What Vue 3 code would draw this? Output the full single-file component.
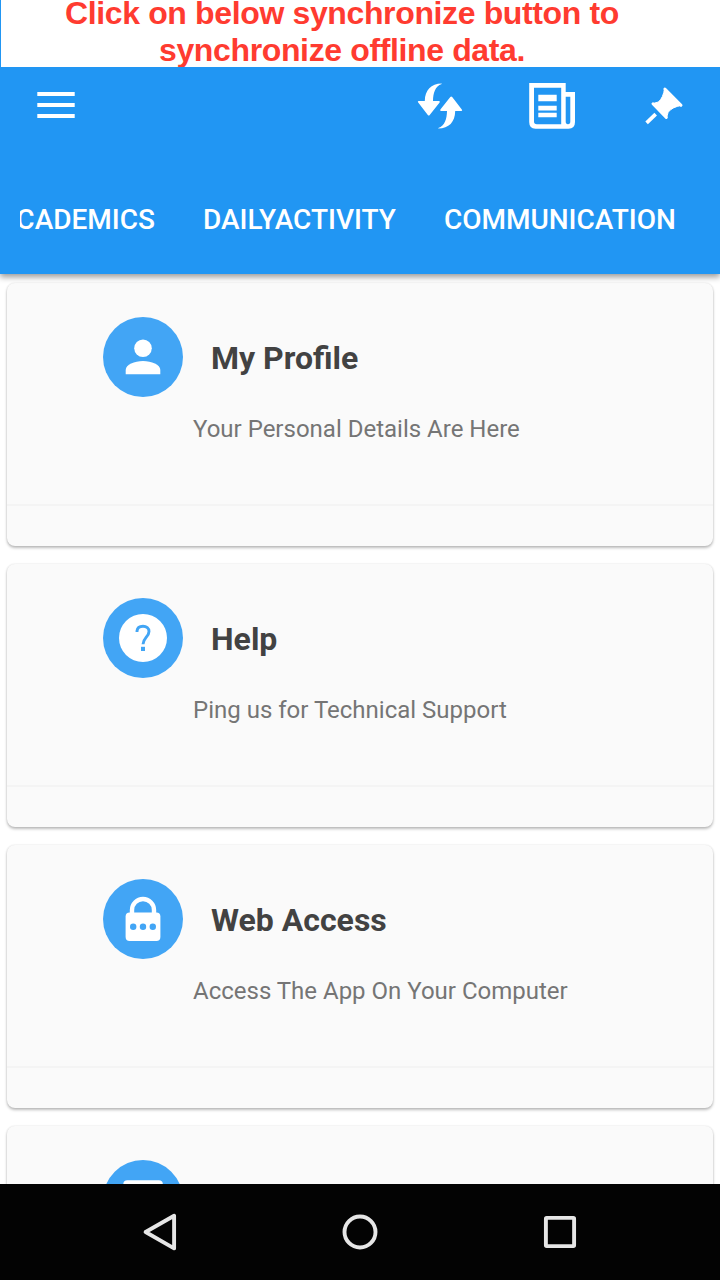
<script setup>
const tabs = [
  { label: 'ACADEMICS', cls: 'first' },
  { label: 'DAILYACTIVITY', cls: 'second' },
  { label: 'COMMUNICATION', cls: 'third' },
]
const cards = [
  { icon: 'person', title: 'My Profile', text: 'Your Personal Details Are Here' },
  { icon: 'help', title: 'Help', text: 'Ping us for Technical Support' },
  { icon: 'lock', title: 'Web Access', text: 'Access The App On Your Computer' },
  { icon: 'page', title: '', text: '' },
]
const arrow = 'M441.7 83.5C431 83.5 425 90 424.8 101H418.6Q417.2 101.2 418.2 102.4L427.8 114.9Q428.8 116.2 429.7 114.9L439.6 102.4Q440.4 101.2 439 101H433C433.2 93 435 86.5 441.7 84Z'
</script>

<template>
  <div class="screen">
    <div class="banner">
      <div class="line one">Click on below synchronize button to</div>
      <div class="line two">synchronize offline data.</div>
    </div>
    <header class="appbar">
      <div class="toolbar">
        <svg class="menu" width="38" height="27" viewBox="0 0 38 27">
          <path d="M0.3 0H37.7V4H0.3ZM0.3 11H37.7V15H0.3ZM0.3 22H37.7V26H0.3Z" fill="#fff" />
        </svg>
        <svg class="sync" width="48" height="48" viewBox="416 82 48 48" fill="#fff">
          <path :d="arrow" />
          <path transform="rotate(180 440 106)" :d="arrow" />
        </svg>
        <svg class="news" width="48" height="48" viewBox="528 82 48 48" fill="#fff">
          <path fill-rule="evenodd" d="M529.2 83H565.7V92H575V122Q575 128.7 568.5 128.7H535.5Q529.2 128.7 529.2 122ZM534 87.7V121.5Q534 124.3 536.8 124.3H561.2V87.7ZM565.7 96.7V121.5Q565.7 124.3 568 124.3Q570.3 124.3 570.3 121.5V96.7Z" />
          <path d="M538.3 94.7H556.7V101.2H538.3ZM538.3 105.8H556.7V110.5H538.3ZM538.3 112.8H556.7V117.3H538.3Z" />
        </svg>
        <svg class="pin" width="40" height="40" viewBox="644 86 40 40" fill="#fff" stroke="#fff" stroke-linecap="round" stroke-linejoin="round">
          <path stroke-width="1" d="M664.6 88.6L681.4 105.4C675.5 106.4 671 108.5 668.2 112.2L666.6 117.4L652.8 103.6L658.4 102C662 99 663.6 94.5 664.6 88.6Z" />
          <path stroke-width="3" d="M664.9 89L681 105.3M653 103.8L666.3 117.4" />
          <path stroke-width="3.7" stroke-linecap="butt" d="M655.7 114.2L646.6 122.9" />
        </svg>
      </div>
      <nav class="tabs">
        <span v-for="t in tabs" :key="t.label" class="tab" :class="t.cls">{{ t.label }}</span>
      </nav>
    </header>
    <main class="list">
      <section v-for="c in cards" :key="c.icon" class="card">
        <div class="body">
          <div class="head">
            <svg width="80" height="80" viewBox="0 0 80 80">
              <circle cx="40" cy="40" r="40" fill="#42a5f5" />
              <g v-if="c.icon === 'person'" fill="#fff">
                <circle cx="40" cy="31.3" r="8.8" />
                <path d="M22.7 57.3V53C22.7 47.5 31.5 44 40 44S57.3 47.5 57.3 53V57.3Z" />
              </g>
              <g v-else-if="c.icon === 'help'">
                <circle cx="40" cy="40" r="24" fill="#fff" />
                <path d="M34 34V33C34.3 30 36.5 28.3 40 28.3S46 30.3 46 33.5C46 38.5 40.2 40 40 46.2" fill="none" stroke="#42a5f5" stroke-width="2.9" />
                <path d="M38 48.8H42V53H38Z" fill="#42a5f5" />
              </g>
              <g v-else-if="c.icon === 'lock'">
                <path d="M29 36V31A11 11 0 0 1 51 31V36" fill="none" stroke="#fff" stroke-width="4.4" />
                <rect x="22.6" y="33.5" width="34.8" height="28.5" rx="4" fill="#fff" />
                <g fill="#42a5f5">
                  <circle cx="30.2" cy="47.7" r="3.2" />
                  <circle cx="40" cy="47.7" r="3.2" />
                  <circle cx="49.8" cy="47.7" r="3.2" />
                </g>
              </g>
              <rect v-else x="20.3" y="20.3" width="39.5" height="40" rx="4" fill="#fff" />
            </svg>
            <h2>{{ c.title }}</h2>
          </div>
          <p>{{ c.text }}</p>
        </div>
      </section>
    </main>
    <footer class="navbar">
      <svg width="36" height="40" viewBox="0 0 36 40">
        <path d="M3.6 20L32.1 3.8V36.4Z" fill="none" stroke="#e6e6e6" stroke-width="3.9" stroke-linejoin="round" />
      </svg>
      <svg width="36" height="40" viewBox="0 0 36 40">
        <circle cx="18" cy="20" r="15.5" fill="none" stroke="#e6e6e6" stroke-width="3.9" />
      </svg>
      <svg width="36" height="40" viewBox="0 0 36 40">
        <rect x="5.9" y="5.9" width="28.2" height="28.2" transform="translate(-2)" rx="0.8" fill="none" stroke="#e6e6e6" stroke-width="3.9" stroke-linejoin="round" />
      </svg>
    </footer>
  </div>
</template>

<style>
body {
  margin: 0;
  background: #fff;
}
</style>

<style scoped>
.screen {
  width: 720px;
  height: 1280px;
  display: flex;
  flex-direction: column;
  overflow: hidden;
  background: #fff;
  font-family: Roboto, sans-serif;
}
.banner {
  box-sizing: border-box;
  height: 67px;
  flex: none;
  border-left: 1px solid #2196f3;
  color: #ff3b30;
  font: bold 32px/27px "Liberation Sans", sans-serif;
  letter-spacing: -0.365px;
  white-space: nowrap;
}
.line.one {
  padding-left: 64px;
}
.line.two {
  margin-top: 7px;
  line-height: 33px;
  padding-left: 158px;
}
.appbar {
  height: 207px;
  flex: none;
  display: flex;
  flex-direction: column;
  background: #2196f3;
  box-shadow: 0 3px 6px rgba(0, 0, 0, 0.4);
  clip-path: inset(0 0 -12px 0);
  position: relative;
  z-index: 1;
}
.toolbar {
  height: 98px;
  box-sizing: border-box;
  padding: 15px 36px 0 37px;
  display: flex;
  align-items: flex-start;
}
.menu {
  margin-top: 10px;
}
.sync {
  margin-left: 341px;
}
.news {
  margin-left: 64px;
}
.pin {
  margin: 4px 0 0 68px;
}
.tabs {
  margin: 0 20px;
  height: 109px;
  display: flex;
  gap: 48px;
  overflow: hidden;
  color: #fff;
  font-size: 28px;
  font-weight: 500;
  line-height: 109px;
  white-space: nowrap;
}
.first {
  margin-left: -22px;
}
.list {
  flex: 1;
  min-height: 0;
  overflow: hidden;
  padding: 9px 7px 0;
  display: flex;
  flex-direction: column;
  gap: 18px;
}
.card {
  height: 263px;
  flex: none;
  border-radius: 8px;
  background: #fafafa;
  box-shadow: 0 2px 3px rgba(0, 0, 0, 0.26), 0 0 2px rgba(0, 0, 0, 0.12);
}
.body {
  box-sizing: border-box;
  height: 223px;
  border-bottom: 2px solid #f4f4f4;
  padding: 34px 0 0 96px;
}
.head {
  display: flex;
  align-items: center;
  gap: 28px;
  height: 80px;
}
h2 {
  margin: 2px 0 0;
  color: #424242;
  font-size: 32px;
  line-height: 40px;
  font-weight: 700;
}
p {
  margin: 16px 0 0 90px;
  color: #757575;
  font-size: 24px;
  line-height: 32px;
}
.navbar {
  height: 96px;
  flex: none;
  box-sizing: border-box;
  background: #030303;
  display: flex;
  align-items: center;
  justify-content: space-between;
  padding: 0 142px;
}
</style>
